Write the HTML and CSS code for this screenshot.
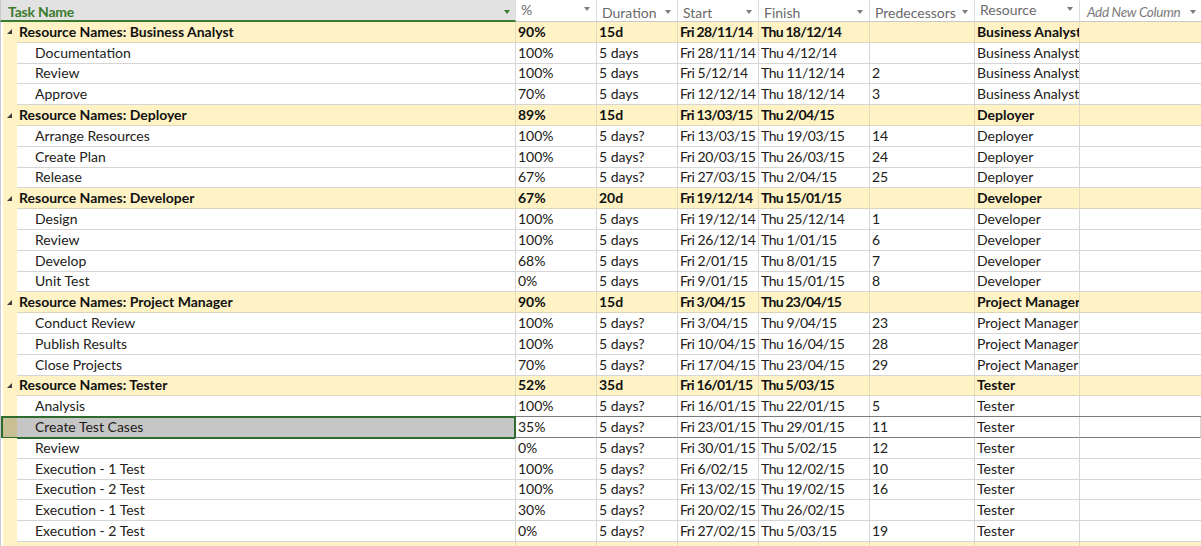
FILE: index.html
```html
<!DOCTYPE html>
<html>
<head>
<meta charset="utf-8">
<link rel="stylesheet" href="styles.css">
</head>
<body>
<div class="sheet">
  <div class="row hdr">
    <div class="h task"><span>Task Name</span><i class="arr green"></i></div>
    <div class="h up"><span>%</span><i class="arr"></i></div>
    <div class="h"><span>Duration</span><i class="arr"></i></div>
    <div class="h"><span>Start</span><i class="arr"></i></div>
    <div class="h"><span>Finish</span><i class="arr"></i></div>
    <div class="h"><span>Predecessors</span><i class="arr"></i></div>
    <div class="h up"><span>Resource</span><i class="arr"></i></div>
    <div class="h add"><span>Add New Column</span><i class="arr"></i></div>
  </div>

  <div class="row grp"><div class="gut"></div><div class="strip"><svg class="tri" width="5" height="5" viewBox="0 0 5 5"><polygon points="5,0 5,5 0,5"/></svg></div><div class="c name">Resource Names: Business Analyst</div><div class="c">90%</div><div class="c">15d</div><div class="c">Fri 28/11/14</div><div class="c">Thu 18/12/14</div><div class="c"></div><div class="c">Business Analyst</div><div class="c"></div></div>
  <div class="row"><div class="gut"></div><div class="strip"></div><div class="c name">Documentation</div><div class="c">100%</div><div class="c">5 days</div><div class="c">Fri 28/11/14</div><div class="c">Thu 4/12/14</div><div class="c"></div><div class="c">Business Analyst</div><div class="c"></div></div>
  <div class="row"><div class="gut"></div><div class="strip"></div><div class="c name">Review</div><div class="c">100%</div><div class="c">5 days</div><div class="c">Fri 5/12/14</div><div class="c">Thu 11/12/14</div><div class="c">2</div><div class="c">Business Analyst</div><div class="c"></div></div>
  <div class="row"><div class="gut"></div><div class="strip"></div><div class="c name">Approve</div><div class="c">70%</div><div class="c">5 days</div><div class="c">Fri 12/12/14</div><div class="c">Thu 18/12/14</div><div class="c">3</div><div class="c">Business Analyst</div><div class="c"></div></div>

  <div class="row grp"><div class="gut"></div><div class="strip"><svg class="tri" width="5" height="5" viewBox="0 0 5 5"><polygon points="5,0 5,5 0,5"/></svg></div><div class="c name">Resource Names: Deployer</div><div class="c">89%</div><div class="c">15d</div><div class="c">Fri 13/03/15</div><div class="c">Thu 2/04/15</div><div class="c"></div><div class="c">Deployer</div><div class="c"></div></div>
  <div class="row"><div class="gut"></div><div class="strip"></div><div class="c name">Arrange Resources</div><div class="c">100%</div><div class="c">5 days?</div><div class="c">Fri 13/03/15</div><div class="c">Thu 19/03/15</div><div class="c">14</div><div class="c">Deployer</div><div class="c"></div></div>
  <div class="row"><div class="gut"></div><div class="strip"></div><div class="c name">Create Plan</div><div class="c">100%</div><div class="c">5 days?</div><div class="c">Fri 20/03/15</div><div class="c">Thu 26/03/15</div><div class="c">24</div><div class="c">Deployer</div><div class="c"></div></div>
  <div class="row"><div class="gut"></div><div class="strip"></div><div class="c name">Release</div><div class="c">67%</div><div class="c">5 days?</div><div class="c">Fri 27/03/15</div><div class="c">Thu 2/04/15</div><div class="c">25</div><div class="c">Deployer</div><div class="c"></div></div>

  <div class="row grp"><div class="gut"></div><div class="strip"><svg class="tri" width="5" height="5" viewBox="0 0 5 5"><polygon points="5,0 5,5 0,5"/></svg></div><div class="c name">Resource Names: Developer</div><div class="c">67%</div><div class="c">20d</div><div class="c">Fri 19/12/14</div><div class="c">Thu 15/01/15</div><div class="c"></div><div class="c">Developer</div><div class="c"></div></div>
  <div class="row"><div class="gut"></div><div class="strip"></div><div class="c name">Design</div><div class="c">100%</div><div class="c">5 days</div><div class="c">Fri 19/12/14</div><div class="c">Thu 25/12/14</div><div class="c">1</div><div class="c">Developer</div><div class="c"></div></div>
  <div class="row"><div class="gut"></div><div class="strip"></div><div class="c name">Review</div><div class="c">100%</div><div class="c">5 days</div><div class="c">Fri 26/12/14</div><div class="c">Thu 1/01/15</div><div class="c">6</div><div class="c">Developer</div><div class="c"></div></div>
  <div class="row"><div class="gut"></div><div class="strip"></div><div class="c name">Develop</div><div class="c">68%</div><div class="c">5 days</div><div class="c">Fri 2/01/15</div><div class="c">Thu 8/01/15</div><div class="c">7</div><div class="c">Developer</div><div class="c"></div></div>
  <div class="row"><div class="gut"></div><div class="strip"></div><div class="c name">Unit Test</div><div class="c">0%</div><div class="c">5 days</div><div class="c">Fri 9/01/15</div><div class="c">Thu 15/01/15</div><div class="c">8</div><div class="c">Developer</div><div class="c"></div></div>

  <div class="row grp"><div class="gut"></div><div class="strip"><svg class="tri" width="5" height="5" viewBox="0 0 5 5"><polygon points="5,0 5,5 0,5"/></svg></div><div class="c name">Resource Names: Project Manager</div><div class="c">90%</div><div class="c">15d</div><div class="c">Fri 3/04/15</div><div class="c">Thu 23/04/15</div><div class="c"></div><div class="c">Project Manager</div><div class="c"></div></div>
  <div class="row"><div class="gut"></div><div class="strip"></div><div class="c name">Conduct Review</div><div class="c">100%</div><div class="c">5 days?</div><div class="c">Fri 3/04/15</div><div class="c">Thu 9/04/15</div><div class="c">23</div><div class="c">Project Manager</div><div class="c"></div></div>
  <div class="row"><div class="gut"></div><div class="strip"></div><div class="c name">Publish Results</div><div class="c">100%</div><div class="c">5 days?</div><div class="c">Fri 10/04/15</div><div class="c">Thu 16/04/15</div><div class="c">28</div><div class="c">Project Manager</div><div class="c"></div></div>
  <div class="row"><div class="gut"></div><div class="strip"></div><div class="c name">Close Projects</div><div class="c">70%</div><div class="c">5 days?</div><div class="c">Fri 17/04/15</div><div class="c">Thu 23/04/15</div><div class="c">29</div><div class="c">Project Manager</div><div class="c"></div></div>

  <div class="row grp"><div class="gut"></div><div class="strip"><svg class="tri" width="5" height="5" viewBox="0 0 5 5"><polygon points="5,0 5,5 0,5"/></svg></div><div class="c name">Resource Names: Tester</div><div class="c">52%</div><div class="c">35d</div><div class="c">Fri 16/01/15</div><div class="c">Thu 5/03/15</div><div class="c"></div><div class="c">Tester</div><div class="c"></div></div>
  <div class="row"><div class="gut"></div><div class="strip"></div><div class="c name">Analysis</div><div class="c">100%</div><div class="c">5 days?</div><div class="c">Fri 16/01/15</div><div class="c">Thu 22/01/15</div><div class="c">5</div><div class="c">Tester</div><div class="c"></div></div>
  <div class="row sel"><div class="gut"></div><div class="strip"></div><div class="c name">Create Test Cases</div><div class="c">35%</div><div class="c">5 days?</div><div class="c">Fri 23/01/15</div><div class="c">Thu 29/01/15</div><div class="c">11</div><div class="c">Tester</div><div class="c"></div><div class="focus"></div></div>
  <div class="row"><div class="gut"></div><div class="strip"></div><div class="c name">Review</div><div class="c">0%</div><div class="c">5 days?</div><div class="c">Fri 30/01/15</div><div class="c">Thu 5/02/15</div><div class="c">12</div><div class="c">Tester</div><div class="c"></div></div>
  <div class="row"><div class="gut"></div><div class="strip"></div><div class="c name">Execution - 1 Test</div><div class="c">100%</div><div class="c">5 days?</div><div class="c">Fri 6/02/15</div><div class="c">Thu 12/02/15</div><div class="c">10</div><div class="c">Tester</div><div class="c"></div></div>
  <div class="row"><div class="gut"></div><div class="strip"></div><div class="c name">Execution - 2 Test</div><div class="c">100%</div><div class="c">5 days?</div><div class="c">Fri 13/02/15</div><div class="c">Thu 19/02/15</div><div class="c">16</div><div class="c">Tester</div><div class="c"></div></div>
  <div class="row"><div class="gut"></div><div class="strip"></div><div class="c name">Execution - 1 Test</div><div class="c">30%</div><div class="c">5 days?</div><div class="c">Fri 20/02/15</div><div class="c">Thu 26/02/15</div><div class="c"></div><div class="c">Tester</div><div class="c"></div></div>
  <div class="row"><div class="gut"></div><div class="strip"></div><div class="c name">Execution - 2 Test</div><div class="c">0%</div><div class="c">5 days?</div><div class="c">Fri 27/02/15</div><div class="c">Thu 5/03/15</div><div class="c">19</div><div class="c">Tester</div><div class="c"></div></div>
  <div class="row grp"><div class="gut"></div><div class="strip"></div><div class="c name"></div><div class="c"></div><div class="c"></div><div class="c"></div><div class="c"></div><div class="c"></div><div class="c"></div><div class="c"></div></div>
</div>
</body>
</html>
```

FILE: styles.css
```css
html, body {
  margin: 0;
  padding: 0;
  background: #ffffff;
}
body {
  font-family: "Lato", "Noto Sans", sans-serif;
  font-size: 14px;
  color: #222018;
  overflow: hidden;
}
.sheet {
  width: 1201px;
  height: 546px;
  overflow: hidden;
}
.row {
  display: grid;
  grid-template-columns: 3px 14px 499px 81px 81px 81px 111px 105px 105px 121px;
  height: 20.8px;
  position: relative;
}
.row.hdr {
  grid-template-columns: 516px 81px 81px 81px 111px 105px 105px 121px;
  height: 22px;
}
.h {
  box-sizing: border-box;
  height: 22px;
  display: flex;
  align-items: center;
  padding: 3px 0 0 5px;
  border-right: 1px solid #dcdcdc;
  border-bottom: 1px solid #c8c8c8;
  color: #6a6a6a;
  white-space: nowrap;
  overflow: hidden;
}
.h.up {
  padding-top: 0;
  padding-bottom: 3px;
}
.h.task {
  background: #e2e2e2;
  border-left: 1px solid #c8c8c8;
  border-bottom: 2px solid #3b7b30;
  padding-left: 7px;
  padding-top: 3px;
  color: #3b7a2c;
  font-weight: bold;
  letter-spacing: -0.2px;
}
.h.add {
  font-style: italic;
  color: #7a7a7a;
  padding-left: 7px;
  border-right: none;
  font-size: 13.5px;
  letter-spacing: -0.3px;
}
.arr {
  margin-left: auto;
  margin-right: 6px;
  width: 0;
  height: 0;
  border-left: 3.5px solid transparent;
  border-right: 3.5px solid transparent;
  border-top: 4px solid #7c7c7c;
  flex: none;
}
.h.add .arr { margin-right: 5px; }
.arr.green { border-top-color: #3b7b30; margin-right: 5px; }

.gut {
  border-left: 1px solid #c8c8c8;
  background: #ffffff;
}
.strip {
  background: #fff3c5;
  display: flex;
  align-items: center;
  padding-left: 4px;
}
.tri { fill: #3c3c3c; display: block; margin-top: -1px; }
.c {
  box-sizing: border-box;
  border-right: 1px solid #d6d6d6;
  border-bottom: 1px solid #d6d6d6;
  padding-left: 2px;
  padding-bottom: 1px;
  display: flex;
  align-items: center;
  white-space: nowrap;
  overflow: hidden;
}
.c:last-of-type { border-right: none; }
.c.name { padding-left: 18px; }
.row > .c:nth-child(6),
.row > .c:nth-child(7) { letter-spacing: -0.45px; }
.grp > .c:nth-child(6),
.grp > .c:nth-child(7) { letter-spacing: -0.75px; }
.grp .c { background: #fff3c5; font-weight: bold; color: #111; }
.grp .c.name { padding-left: 2px; }
.grp .c { border-right-color: #e2dcc0; border-bottom-color: #ddd6bb; }

.sel .c { box-shadow: 0 -1px 0 #7c7c7c; border-bottom-color: #7c7c7c; }
.sel .strip { background: #c9bf95; }
.sel .c.name { background: #c6c6c6; }
.focus {
  position: absolute;
  left: 1px;
  top: -1px;
  width: 515px;
  height: 22.8px;
  box-sizing: border-box;
  border: 2px solid #2e6b2e;
  pointer-events: none;
}
```
